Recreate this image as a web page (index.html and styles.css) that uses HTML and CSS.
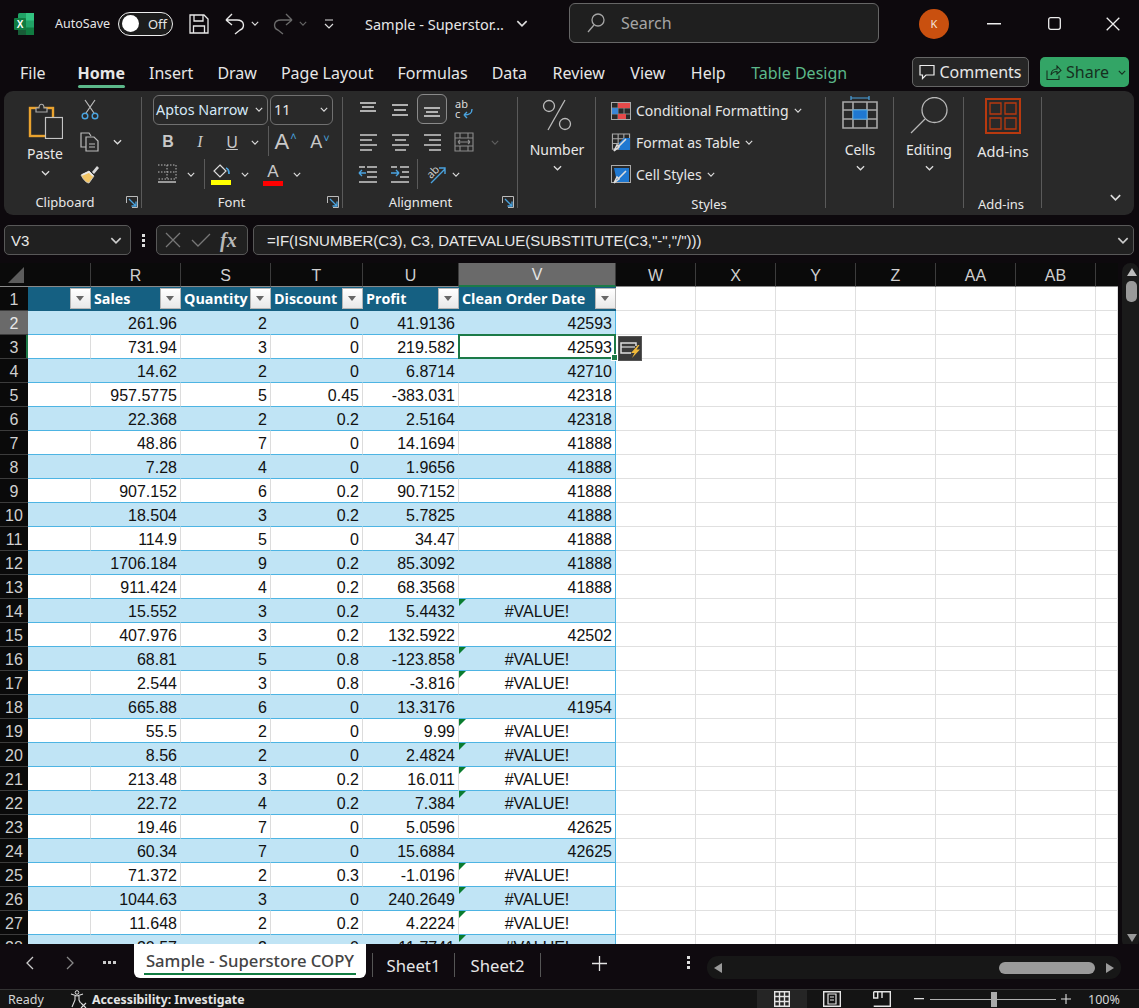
FILE: index.html
```html
<!DOCTYPE html>
<html lang="en">
<head>
<meta charset="utf-8">
<title>Sample - Superstore COPY - Excel</title>
<link rel="stylesheet" href="styles.css">
</head>
<body>
<svg class="defs" width="0" height="0" aria-hidden="true">
  <symbol id="chev" viewBox="0 0 10 6"><path d="M1 1l4 4 4-4" fill="none" stroke="currentColor" stroke-width="1.4"/></symbol>
  <symbol id="launch" viewBox="0 0 12 12"><path d="M.5 7V.5H11.5V11.5H6" fill="none" stroke="#bbb"/><path d="M3 3l7 7M10 5.5V10H5.5" fill="none" stroke="#4aa3df" stroke-width="1.3"/></symbol>
  <symbol id="lines-a" viewBox="0 0 20 18"><path d="M2 2h16M4 6h12M2 10h16" stroke="#ddd" stroke-width="1.3" fill="none"/></symbol>
  <symbol id="lines-m" viewBox="0 0 20 18"><path d="M2 4h16M4 9h12M2 14h16" stroke="#ddd" stroke-width="1.3" fill="none"/></symbol>
  <symbol id="lines-b" viewBox="0 0 20 18"><path d="M2 8h16M4 12h12M2 16h16" stroke="#ddd" stroke-width="1.3" fill="none"/></symbol>
  <symbol id="h-l" viewBox="0 0 20 20"><path d="M2 3h17M2 8h12M2 13h17M2 18h12" stroke="#ccc" stroke-width="1.3" fill="none"/></symbol>
  <symbol id="h-c" viewBox="0 0 20 20"><path d="M2 3h17M5 8h11M2 13h17M5 18h11" stroke="#ccc" stroke-width="1.3" fill="none"/></symbol>
  <symbol id="h-r" viewBox="0 0 20 20"><path d="M2 3h17M7 8h12M2 13h17M7 18h12" stroke="#ccc" stroke-width="1.3" fill="none"/></symbol>
  <symbol id="tbl" viewBox="0 0 20 20"><path d="M1 1h18v16H1zM1 6h18M1 11h18M7 1v16M13 1v16" fill="none" stroke="#aaa" stroke-width="1.2"/></symbol>
</svg>

<header class="titlebar">
  <svg class="xl" width="22" height="24" viewBox="0 0 22 24">
    <rect x="5" y="1" width="16" height="22" rx="1.5" fill="#21a366"/>
    <rect x="13" y="1" width="8" height="7.5" fill="#33c481"/>
    <rect x="5" y="15.5" width="8" height="7.5" fill="#185c37"/>
    <rect x="13" y="15.5" width="8" height="7.5" fill="#107c41"/>
    <rect x="1" y="6" width="12" height="12" rx="1" fill="#107c41"/>
    <text x="7" y="15.8" class="xl-x">X</text>
  </svg>
  <span class="autosave">AutoSave</span>
  <span class="toggle"><i class="knob"></i><span>Off</span></span>
  <svg class="q-save" width="20" height="20" viewBox="0 0 20 20"><path d="M1 1h14l4 4v14H1zM5 1v6h9V1M4.500 19v-7h11v7" fill="none" stroke="#e8e8e8" stroke-width="1.3"/></svg>
  <svg class="q-undo" width="20" height="22" viewBox="0 0 20 22"><path d="M1 7h11c8 0 8 8 3 10l-5 4M1 7l6-6M1 7l6 5" fill="none" stroke="#e8e8e8" stroke-width="1.4"/></svg>
  <svg class="q-chev" width="8" height="5"><use href="#chev"/></svg>
  <svg class="q-redo" width="20" height="22" viewBox="0 0 20 22"><path d="M19 7H8C0 7 0 15 5 17l5 4M19 7l-6-6M19 7l-6 5" fill="none" stroke="#6a6a6a" stroke-width="1.4"/></svg>
  <svg class="q-chev dim" width="8" height="5"><use href="#chev"/></svg>
  <svg class="q-more" width="10" height="10" viewBox="0 0 10 10"><path d="M1 1h8M1 5l4 4 4-4" fill="none" stroke="#ddd" stroke-width="1.2"/></svg>
  <span class="doc">Sample - Superstor...</span>
  <svg class="doc-chev" width="12" height="7"><use href="#chev"/></svg>
  <div class="search">
    <svg width="18" height="20" viewBox="0 0 18 20"><circle cx="11" cy="7" r="6" fill="none" stroke="#a5a5a5" stroke-width="1.3"/><path d="M7 12l-6 7" stroke="#a5a5a5" stroke-width="1.3"/></svg>
    <span>Search</span>
  </div>
  <span class="avatar">K</span>
  <svg class="win-min" width="14" height="2"><rect width="14" height="1.500" fill="#eee"/></svg>
  <svg class="win-max" width="13" height="13" viewBox="0 0 13 13"><rect x=".7" y=".7" width="11.600" height="11.600" rx="2" fill="none" stroke="#eee" stroke-width="1.300"/></svg>
  <svg class="win-close" width="14" height="14" viewBox="0 0 14 14"><path d="M.7.700l12.600 12.600M13.300.700L.7 13.300" stroke="#eee" stroke-width="1.300"/></svg>
</header>

<nav class="tabs">
  <span class="tab t-file">File</span>
  <span class="tab t-home">Home</span>
  <span class="tab">Insert</span>
  <span class="tab">Draw</span>
  <span class="tab">Page Layout</span>
  <span class="tab">Formulas</span>
  <span class="tab">Data</span>
  <span class="tab">Review</span>
  <span class="tab">View</span>
  <span class="tab">Help</span>
  <span class="tab t-design">Table Design</span>
  <span class="btn-comments">
    <svg width="16" height="16" viewBox="0 0 16 16"><path d="M1 1.500h14v9.500H7l-3.500 3.500V11H1z" fill="none" stroke="#eee" stroke-width="1.200"/></svg>
    Comments
  </span>
  <span class="btn-share">
    <svg width="16" height="15" viewBox="0 0 16 15"><path d="M1 5.500v9h12v-4M5 10c0-4 3-6 6-6V1l4 4.500L11 9V6.500C8 6.500 6 8 5 10z" fill="none" stroke="#16301f" stroke-width="1.100"/></svg>
    Share
    <svg class="share-chev" width="8" height="5"><use href="#chev"/></svg>
  </span>
</nav>

<section class="ribbon">
  <div class="group g-clip">
    <div class="body">
      <div class="paste">
        <svg width="36" height="38" viewBox="0 0 36 38"><rect x="3" y="7" width="23" height="28" fill="none" stroke="#eaa32f" stroke-width="2.400"/><path d="M9 7h3c0-5 5-5 5 0h3v4H9z" fill="#292929" stroke="#aaa" stroke-width="1.200"/><rect x="18.500" y="16.500" width="17" height="21" fill="#292929" stroke="#c4c4c4" stroke-width="1.200"/></svg>
        <span class="big-label">Paste</span>
        <svg class="chev" width="9" height="6"><use href="#chev"/></svg>
      </div>
      <div class="clip-tools">
        <div class="irow"><svg width="20" height="22" viewBox="0 0 20 22"><path d="M5 1l9 13M15 1L6 14" stroke="#bbb" stroke-width="1.200" fill="none"/><circle cx="5" cy="17" r="2.800" fill="none" stroke="#4aa3df" stroke-width="1.400"/><circle cx="15" cy="17" r="2.800" fill="none" stroke="#4aa3df" stroke-width="1.400"/></svg></div>
        <div class="irow"><svg width="20" height="20" viewBox="0 0 20 20"><path d="M8 15H1V1h8l2 3" fill="none" stroke="#bbb" stroke-width="1.200"/><path d="M6 5h8l4 4v10H6zM9 12h6M9 15h6" fill="#292929" stroke="#bbb" stroke-width="1.200"/></svg><svg class="chev c-copy" width="9" height="6"><use href="#chev"/></svg></div>
        <div class="irow"><svg width="20" height="20" viewBox="0 0 20 20"><path d="M12 8l5-6 2 2-5 6" fill="#d8d8d8"/><path d="M1 11l8-4 5 5-5 7c-3 0-6-4-8-8z" fill="#f2c565" stroke="#d8d8d8" stroke-width=".8"/><path d="M2 11l7-3 4 4" fill="none" stroke="#e8e8e8" stroke-width="1.500"/></svg></div>
      </div>
    </div>
    <div class="glabel"><span>Clipboard</span><svg class="launcher" width="12" height="12"><use href="#launch"/></svg></div>
  </div>

  <div class="group g-font">
    <div class="body col">
      <div class="frow r1">
        <span class="combo c-name">Aptos Narrow<svg width="8" height="5"><use href="#chev"/></svg></span>
        <span class="combo c-size">11<svg width="8" height="5"><use href="#chev"/></svg></span>
      </div>
      <div class="frow">
        <span class="fi b">B</span><span class="fi i">I</span><span class="fi u">U</span>
        <svg class="fchev" width="8" height="5"><use href="#chev"/></svg>
        <i class="vsep vs-a"></i>
        <span class="fi grow">A<small>&#708;</small></span><span class="fi shrink">A<small>&#709;</small></span>
      </div>
      <div class="frow r3">
        <span class="fi f-border"><svg width="20" height="20" viewBox="0 0 20 20"><path d="M1 1h18v14H1M1 8h18M10 1v14" fill="none" stroke="#bbb" stroke-dasharray="1.500 1.500"/><path d="M1 18h18" stroke="#ccc" stroke-width="1.400"/></svg></span>
        <svg class="fchev" width="8" height="5"><use href="#chev"/></svg>
        <i class="vsep vs-b"></i>
        <span class="fi f-fill"><svg width="20" height="22" viewBox="0 0 20 22"><path d="M9 2l6 6-6 6-6-6z" fill="none" stroke="#ddd" stroke-width="1.200"/><path d="M15 5c3 1 3 4 3 6" stroke="#4aa3df" stroke-width="1.800" fill="none"/><rect y="17" width="20" height="5" fill="#ffff00"/></svg></span>
        <svg class="fchev" width="8" height="5"><use href="#chev"/></svg>
        <span class="fi f-color"><span class="fc-a">A</span></span>
        <svg class="fchev" width="8" height="5"><use href="#chev"/></svg>
      </div>
    </div>
    <div class="glabel"><span>Font</span><svg class="launcher" width="12" height="12"><use href="#launch"/></svg></div>
  </div>

  <div class="group g-align">
    <div class="body">
      <div class="agrid">
        <span class="ai"><svg width="20" height="18"><use href="#lines-a"/></svg></span>
        <span class="ai"><svg width="20" height="18"><use href="#lines-m"/></svg></span>
        <span class="ai on"><svg width="20" height="18"><use href="#lines-b"/></svg></span>
        <span class="ai"><svg width="20" height="24" viewBox="0 0 20 24"><text x="1" y="10" class="wrap-t">ab</text><text x="1" y="20" class="wrap-t">c</text><path d="M18 11c0 5-3 6-8 6M10 17l3-3M10 17l3 3" fill="none" stroke="#4aa3df" stroke-width="1.400"/></svg></span>
        <span class="ai gap"></span>
        <span class="ai"><svg width="20" height="20"><use href="#h-l"/></svg></span>
        <span class="ai"><svg width="20" height="20"><use href="#h-c"/></svg></span>
        <span class="ai"><svg width="20" height="20"><use href="#h-r"/></svg></span>
        <span class="ai"><svg width="20" height="20" viewBox="0 0 20 20"><path d="M1 1h18v18H1zM1 6h18M1 14h18M6 1v5M14 1v5M6 14v5M14 14v5M4 10h12M4 10l2-2M4 10l2 2M16 10l-2-2M16 10l-2 2" fill="none" stroke="#8c8c8c" stroke-width="1.100"/></svg></span>
        <span class="ai"><svg class="dimchev" width="8" height="5"><use href="#chev"/></svg></span>
        <span class="ai"><svg width="20" height="20" viewBox="0 0 20 20"><path d="M9 3h10M9 8h10M9 13h10M1 18h18M1 3h6" stroke="#ccc" stroke-width="1.300" fill="none"/><path d="M1 9h7M1 9l3-3M1 9l3 3" stroke="#4aa3df" stroke-width="1.400" fill="none"/></svg></span>
        <span class="ai"><svg width="20" height="20" viewBox="0 0 20 20"><path d="M10 3h9M10 13h9M1 18h18M1 3h6M12 8h7" stroke="#ccc" stroke-width="1.300" fill="none"/><path d="M1 9h8M9 9L6 6M9 9l-3 3" stroke="#4aa3df" stroke-width="1.400" fill="none"/></svg></span>
        <span class="ai orient"><i class="vsep vs-c"></i><svg class="ic-orient" width="22" height="22" viewBox="0 0 22 22"><text x="2" y="13" class="orient-t" transform="rotate(-45 8 10)">ab</text><path d="M6 20L20 6M14 5h6v6" fill="none" stroke="#4aa3df" stroke-width="1.400"/></svg><svg class="ochev" width="8" height="5"><use href="#chev"/></svg></span>
      </div>
    </div>
    <div class="glabel"><span>Alignment</span><svg class="launcher" width="12" height="12"><use href="#launch"/></svg></div>
  </div>

  <div class="group g-number">
    <div class="bigbtn">
      <svg class="pct" width="32" height="32" viewBox="0 0 32 32"><circle cx="8" cy="7" r="5.500" fill="none" stroke="#bbb" stroke-width="1.300"/><circle cx="24" cy="25" r="5.500" fill="none" stroke="#bbb" stroke-width="1.300"/><path d="M24 1L7 31" stroke="#bbb" stroke-width="1.300"/></svg>
      <span class="big-label">Number</span>
      <svg class="chev" width="9" height="6"><use href="#chev"/></svg>
    </div>
  </div>

  <div class="group g-styles">
    <div class="body col sty">
      <div class="srow"><svg width="20" height="18" viewBox="0 0 20 18"><rect x=".5" y=".5" width="19" height="17" fill="none" stroke="#aaa"/><path d="M1 6h18M1 12h18M7 1v16M13 1v16" stroke="#888" fill="none"/><rect x="7" y="1" width="12" height="5" fill="#e64a4a"/><rect x="7" y="12" width="8" height="5" fill="#e64a4a"/><rect x="1" y="6" width="6" height="6" fill="#3b86d6"/></svg><span>Conditional Formatting</span><svg width="8" height="5"><use href="#chev"/></svg></div>
      <div class="srow"><svg width="20" height="19" viewBox="0 0 20 19"><use href="#tbl"/><path d="M8 10l5-5h6v12H8z" fill="#1f78d1"/><path d="M3 18l3-6 2 2zM8 13l7-7" stroke="#ddd" stroke-width="1.600" fill="none"/></svg><span>Format as Table</span><svg width="8" height="5"><use href="#chev"/></svg></div>
      <div class="srow"><svg width="20" height="19" viewBox="0 0 20 19"><rect x=".5" y=".5" width="19" height="17" fill="none" stroke="#aaa"/><path d="M3 3h15v14H6z" fill="#1f78d1"/><path d="M3 18l3-6 2 2zM8 13l7-7" stroke="#ddd" stroke-width="1.600" fill="none"/></svg><span>Cell Styles</span><svg width="8" height="5"><use href="#chev"/></svg></div>
    </div>
    <div class="glabel lo"><span>Styles</span></div>
  </div>

  <div class="group g-cells">
    <div class="bigbtn">
      <svg class="ic-cells" width="36" height="34" viewBox="0 0 36 34"><path d="M9 2h18M9 0v4M27 0v4" stroke="#4aa3df" stroke-width="1.200" fill="none"/><path d="M1 6h34v26H1zM1 14h34M1 23h34M11 6v26M25 6v26" fill="none" stroke="#a8a8a8" stroke-width="1.600"/><rect x="11" y="14" width="14" height="9" fill="#1f78d1" stroke="#4aa3df"/></svg>
      <span class="big-label">Cells</span>
      <svg class="chev" width="9" height="6"><use href="#chev"/></svg>
    </div>
  </div>

  <div class="group g-edit">
    <div class="bigbtn">
      <svg class="ic-edit" width="38" height="37" viewBox="0 0 38 37"><circle cx="24.500" cy="13" r="12.500" fill="none" stroke="#b8b8b8" stroke-width="1.300"/><path d="M15 22L1 36" stroke="#b8b8b8" stroke-width="1.300"/></svg>
      <span class="big-label">Editing</span>
      <svg class="chev" width="9" height="6"><use href="#chev"/></svg>
    </div>
  </div>

  <div class="group g-addins">
    <div class="bigbtn add">
      <svg class="ic-add" width="36" height="36" viewBox="0 0 36 36"><rect x="1" y="1" width="34" height="34" fill="none" stroke="#b8390f" stroke-width="2"/><path d="M5 5h11v11H5zM20 5h11v11H20zM5 20h11v11H5zM20 20h11v11H20z" fill="none" stroke="#b8390f" stroke-width="1.300"/></svg>
      <span class="big-label">Add-ins</span>
    </div>
    <div class="glabel lo"><span>Add-ins</span></div>
  </div>

  <svg class="collapse" width="13" height="7"><use href="#chev"/></svg>
</section>

<section class="formula">
  <div class="namebox"><span>V3</span><svg width="12" height="7"><use href="#chev"/></svg></div>
  <span class="dots"><i></i><i></i><i></i></span>
  <div class="fxbox">
    <svg width="16" height="16" viewBox="0 0 16 16"><path d="M1 1l14 14M15 1L1 15" stroke="#777" stroke-width="1.300"/></svg>
    <svg width="20" height="14" viewBox="0 0 20 14"><path d="M1 7l6 6L19 1" fill="none" stroke="#777" stroke-width="1.300"/></svg>
    <span class="fx">fx</span>
  </div>
  <div class="fbox"><span>=IF(ISNUMBER(C3), C3, DATEVALUE(SUBSTITUTE(C3,"-","/")))</span><svg width="12" height="7"><use href="#chev"/></svg></div>
</section>

<main class="sheet">
  <div class="gridwrap">
    <table class="grid">
      <colgroup><col class="w28"><col class="w63"><col class="w90"><col class="w90"><col class="w92"><col class="w96"><col class="w157"><col class="w80"><col class="w80"><col class="w80"><col class="w80"><col class="w80"><col class="w80"><col class="w22"></colgroup>
      <thead>
        <tr class="cols"><th class="corner"><i></i></th><th></th><th>R</th><th>S</th><th>T</th><th>U</th><th class="cur">V</th><th>W</th><th>X</th><th>Y</th><th>Z</th><th>AA</th><th>AB</th><th></th></tr>
      </thead>
      <tbody>
        <tr class="hdr"><th>1</th><td><div class="hc"><span></span><i class="fb"></i></div></td><td><div class="hc"><span>Sales</span><i class="fb"></i></div></td><td><div class="hc"><span>Quantity</span><i class="fb"></i></div></td><td><div class="hc"><span>Discount</span><i class="fb"></i></div></td><td><div class="hc"><span>Profit</span><i class="fb"></i></div></td><td><div class="hc"><span>Clean Order Date</span><i class="fb"></i></div></td><td class="e"></td><td class="e"></td><td class="e"></td><td class="e"></td><td class="e"></td><td class="e"></td><td class="e"></td></tr>
        <tr class="alt"><th class="rowon">2</th><td></td><td>261.96</td><td>2</td><td>0</td><td>41.9136</td><td>42593</td><td class="e"></td><td class="e"></td><td class="e"></td><td class="e"></td><td class="e"></td><td class="e"></td><td class="e"></td></tr>
        <tr><th class="rowcur">3</th><td></td><td>731.94</td><td>3</td><td>0</td><td>219.582</td><td class="sel">42593<i class="handle"></i><span class="flash"><svg width="22" height="20" viewBox="0 0 22 20"><path d="M12 14H2V4h15v3" fill="none" stroke="#ddd" stroke-width="1.500"/><path d="M2 8h14" stroke="#ddd" stroke-width="1.200"/><path d="M19 6l-7 8h3.500l-2.500 5 8-8.500h-3.500l3-4.500z" fill="#f0b93a"/></svg></span></td><td class="e"></td><td class="e"></td><td class="e"></td><td class="e"></td><td class="e"></td><td class="e"></td><td class="e"></td></tr>
        <tr class="alt"><th>4</th><td></td><td>14.62</td><td>2</td><td>0</td><td>6.8714</td><td>42710</td><td class="e"></td><td class="e"></td><td class="e"></td><td class="e"></td><td class="e"></td><td class="e"></td><td class="e"></td></tr>
        <tr><th>5</th><td></td><td>957.5775</td><td>5</td><td>0.45</td><td>-383.031</td><td>42318</td><td class="e"></td><td class="e"></td><td class="e"></td><td class="e"></td><td class="e"></td><td class="e"></td><td class="e"></td></tr>
        <tr class="alt"><th>6</th><td></td><td>22.368</td><td>2</td><td>0.2</td><td>2.5164</td><td>42318</td><td class="e"></td><td class="e"></td><td class="e"></td><td class="e"></td><td class="e"></td><td class="e"></td><td class="e"></td></tr>
        <tr><th>7</th><td></td><td>48.86</td><td>7</td><td>0</td><td>14.1694</td><td>41888</td><td class="e"></td><td class="e"></td><td class="e"></td><td class="e"></td><td class="e"></td><td class="e"></td><td class="e"></td></tr>
        <tr class="alt"><th>8</th><td></td><td>7.28</td><td>4</td><td>0</td><td>1.9656</td><td>41888</td><td class="e"></td><td class="e"></td><td class="e"></td><td class="e"></td><td class="e"></td><td class="e"></td><td class="e"></td></tr>
        <tr><th>9</th><td></td><td>907.152</td><td>6</td><td>0.2</td><td>90.7152</td><td>41888</td><td class="e"></td><td class="e"></td><td class="e"></td><td class="e"></td><td class="e"></td><td class="e"></td><td class="e"></td></tr>
        <tr class="alt"><th>10</th><td></td><td>18.504</td><td>3</td><td>0.2</td><td>5.7825</td><td>41888</td><td class="e"></td><td class="e"></td><td class="e"></td><td class="e"></td><td class="e"></td><td class="e"></td><td class="e"></td></tr>
        <tr><th>11</th><td></td><td>114.9</td><td>5</td><td>0</td><td>34.47</td><td>41888</td><td class="e"></td><td class="e"></td><td class="e"></td><td class="e"></td><td class="e"></td><td class="e"></td><td class="e"></td></tr>
        <tr class="alt"><th>12</th><td></td><td>1706.184</td><td>9</td><td>0.2</td><td>85.3092</td><td>41888</td><td class="e"></td><td class="e"></td><td class="e"></td><td class="e"></td><td class="e"></td><td class="e"></td><td class="e"></td></tr>
        <tr><th>13</th><td></td><td>911.424</td><td>4</td><td>0.2</td><td>68.3568</td><td>41888</td><td class="e"></td><td class="e"></td><td class="e"></td><td class="e"></td><td class="e"></td><td class="e"></td><td class="e"></td></tr>
        <tr class="alt"><th>14</th><td></td><td>15.552</td><td>3</td><td>0.2</td><td>5.4432</td><td class="err">#VALUE!</td><td class="e"></td><td class="e"></td><td class="e"></td><td class="e"></td><td class="e"></td><td class="e"></td><td class="e"></td></tr>
        <tr><th>15</th><td></td><td>407.976</td><td>3</td><td>0.2</td><td>132.5922</td><td>42502</td><td class="e"></td><td class="e"></td><td class="e"></td><td class="e"></td><td class="e"></td><td class="e"></td><td class="e"></td></tr>
        <tr class="alt"><th>16</th><td></td><td>68.81</td><td>5</td><td>0.8</td><td>-123.858</td><td class="err">#VALUE!</td><td class="e"></td><td class="e"></td><td class="e"></td><td class="e"></td><td class="e"></td><td class="e"></td><td class="e"></td></tr>
        <tr><th>17</th><td></td><td>2.544</td><td>3</td><td>0.8</td><td>-3.816</td><td class="err">#VALUE!</td><td class="e"></td><td class="e"></td><td class="e"></td><td class="e"></td><td class="e"></td><td class="e"></td><td class="e"></td></tr>
        <tr class="alt"><th>18</th><td></td><td>665.88</td><td>6</td><td>0</td><td>13.3176</td><td>41954</td><td class="e"></td><td class="e"></td><td class="e"></td><td class="e"></td><td class="e"></td><td class="e"></td><td class="e"></td></tr>
        <tr><th>19</th><td></td><td>55.5</td><td>2</td><td>0</td><td>9.99</td><td class="err">#VALUE!</td><td class="e"></td><td class="e"></td><td class="e"></td><td class="e"></td><td class="e"></td><td class="e"></td><td class="e"></td></tr>
        <tr class="alt"><th>20</th><td></td><td>8.56</td><td>2</td><td>0</td><td>2.4824</td><td class="err">#VALUE!</td><td class="e"></td><td class="e"></td><td class="e"></td><td class="e"></td><td class="e"></td><td class="e"></td><td class="e"></td></tr>
        <tr><th>21</th><td></td><td>213.48</td><td>3</td><td>0.2</td><td>16.011</td><td class="err">#VALUE!</td><td class="e"></td><td class="e"></td><td class="e"></td><td class="e"></td><td class="e"></td><td class="e"></td><td class="e"></td></tr>
        <tr class="alt"><th>22</th><td></td><td>22.72</td><td>4</td><td>0.2</td><td>7.384</td><td class="err">#VALUE!</td><td class="e"></td><td class="e"></td><td class="e"></td><td class="e"></td><td class="e"></td><td class="e"></td><td class="e"></td></tr>
        <tr><th>23</th><td></td><td>19.46</td><td>7</td><td>0</td><td>5.0596</td><td>42625</td><td class="e"></td><td class="e"></td><td class="e"></td><td class="e"></td><td class="e"></td><td class="e"></td><td class="e"></td></tr>
        <tr class="alt"><th>24</th><td></td><td>60.34</td><td>7</td><td>0</td><td>15.6884</td><td>42625</td><td class="e"></td><td class="e"></td><td class="e"></td><td class="e"></td><td class="e"></td><td class="e"></td><td class="e"></td></tr>
        <tr><th>25</th><td></td><td>71.372</td><td>2</td><td>0.3</td><td>-1.0196</td><td class="err">#VALUE!</td><td class="e"></td><td class="e"></td><td class="e"></td><td class="e"></td><td class="e"></td><td class="e"></td><td class="e"></td></tr>
        <tr class="alt"><th>26</th><td></td><td>1044.63</td><td>3</td><td>0</td><td>240.2649</td><td class="err">#VALUE!</td><td class="e"></td><td class="e"></td><td class="e"></td><td class="e"></td><td class="e"></td><td class="e"></td><td class="e"></td></tr>
        <tr><th>27</th><td></td><td>11.648</td><td>2</td><td>0.2</td><td>4.2224</td><td class="err">#VALUE!</td><td class="e"></td><td class="e"></td><td class="e"></td><td class="e"></td><td class="e"></td><td class="e"></td><td class="e"></td></tr>
        <tr class="alt"><th>28</th><td></td><td>20.57</td><td>2</td><td>0</td><td>11.7741</td><td class="err">#VALUE!</td><td class="e"></td><td class="e"></td><td class="e"></td><td class="e"></td><td class="e"></td><td class="e"></td><td class="e"></td></tr>
      </tbody>
    </table>
  </div>
  <div class="vscroll">
    <i class="tri-up"></i>
    <i class="vthumb"></i>
    <i class="spacer"></i>
    <i class="tri-down"></i>
  </div>
</main>

<section class="sheettabs">
  <svg class="nav-l" width="9" height="14" viewBox="0 0 9 14"><path d="M8 1L2 7l6 6" fill="none" stroke="#ccc" stroke-width="1.300"/></svg>
  <svg class="nav-r" width="9" height="14" viewBox="0 0 9 14"><path d="M1 1l6 6-6 6" fill="none" stroke="#888" stroke-width="1.300"/></svg>
  <span class="nav-more"><i></i><i></i><i></i></span>
  <span class="stab active"><span>Sample - Superstore COPY</span></span>
  <span class="stab plain">Sheet1</span>
  <span class="stab plain">Sheet2</span>
  <svg class="add-sheet" width="15" height="15" viewBox="0 0 15 15"><path d="M7.500 0v15M0 7.500h15" stroke="#e4e4e4" stroke-width="1.300"/></svg>
  <span class="kebab"><i></i><i></i><i></i></span>
  <div class="hscroll">
    <i class="tri-left"></i>
    <i class="hthumb"></i>
    <i class="tri-right"></i>
  </div>
</section>

<footer class="status">
  <span class="ready">Ready</span>
  <svg class="acc" width="18" height="18" viewBox="0 0 18 18"><circle cx="7" cy="2.500" r="1.800" fill="none" stroke="#ddd"/><path d="M1 4l6 2 6-2M5 6v4l-3 7M9 6v4l1.500 3" fill="none" stroke="#ddd" stroke-width="1.100"/><path d="M11 13l5 5M16 13l-5 5" stroke="#ddd" stroke-width="1.100"/></svg>
  <span class="acc-t">Accessibility: Investigate</span>
  <span class="viewbtn on"><svg width="16" height="16" viewBox="0 0 16 16"><path d="M.7.700h14.600v14.600H.7zM.7 5.500h14.600M.7 10.500h14.600M5.500.700v14.600M10.500.700v14.600" fill="none" stroke="#e4e4e4" stroke-width="1.400"/></svg></span>
  <span class="viewbtn"><svg width="18" height="16" viewBox="0 0 18 16"><path d="M.7.700h16.600v14.600H.7z" fill="none" stroke="#e4e4e4" stroke-width="1.400"/><path d="M5 3h8v10H5zM7 6h4M7 9h4" fill="none" stroke="#e4e4e4" stroke-width="1.200"/></svg></span>
  <span class="viewbtn"><svg width="18" height="16" viewBox="0 0 18 16"><path d="M.7.700h16.600v14.600H.7M17.300 15.300V.7M.7.700v6.300h4V.7M9 .700v6.300" fill="none" stroke="#e4e4e4" stroke-width="1.400"/></svg></span>
  <svg class="z-minus" width="10" height="2"><rect width="10" height="1.300" fill="#ddd"/></svg>
  <span class="slider"><i></i></span>
  <svg class="z-plus" width="10" height="10" viewBox="0 0 10 10"><path d="M5 0v10M0 5h10" stroke="#ddd" stroke-width="1.100"/></svg>
  <span class="zoom">100%</span>
</footer>
</body>
</html>
```
FILE: styles.css
```css
* { box-sizing: border-box; }
html, body { margin: 0; padding: 0; }
body {
  width: 1139px; height: 1008px; overflow: hidden;
  display: flex; flex-direction: column;
  background: #0d090d; color: #e6e6e6;
  font-family: "Noto Sans", "Open Sans", sans-serif;
  font-size: 14px;
}
i { display: block; font-style: normal; }
svg { display: block; flex: none; }
.defs { position: absolute; }

/* title bar */
.titlebar { height: 47px; display: flex; align-items: center; padding-left: 13px; flex: none; }
.xl-x { font: 700 10px "Liberation Sans", sans-serif; fill: #fff; text-anchor: middle; }
.autosave { margin-left: 20px; font-size: 12.500px; width: 54px; white-space: nowrap; }
.toggle { margin-left: 9px; width: 55px; height: 24px; border: 1.500px solid #eee; border-radius: 12px; display: flex; align-items: center; padding: 0 5px 0 3px; justify-content: space-between; font-size: 13px; background: #1c1c1c; }
.knob { width: 17px; height: 17px; border-radius: 50%; background: #fff; }
.q-save { margin-left: 16px; }
.q-undo { margin-left: 16px; }
.q-chev { margin-left: 6px; color: #ddd; }
.q-chev.dim { color: #666; }
.q-redo { margin-left: 14px; }
.q-more { margin-left: 17px; }
.doc { margin-left: 31px; font-size: 14.500px; width: 143px; white-space: nowrap; }
.doc-chev { margin-left: 8px; color: #ddd; }
.search { margin-left: 41px; width: 310px; height: 40px; margin-top: -1px; border: 1px solid #666; border-radius: 6px; background: #1f1f1f; display: flex; align-items: center; padding-left: 17px; gap: 16px; color: #a5a5a5; font-size: 16px; }
.avatar { margin-left: 40px; width: 30px; height: 30px; border-radius: 50%; background: #c9500f; color: #f5e6dc; font-size: 11px; display: flex; align-items: center; justify-content: center; }
.win-min { margin-left: 38px; }
.win-max { margin-left: 47px; }
.win-close { margin-left: 45px; }

/* ribbon tabs */
.tabs { height: 44px; display: flex; align-items: center; flex: none; padding: 7px 0 0 20px; font-size: 16px; }
.tab { white-space: nowrap; margin-right: 24px; position: relative; }
.tab:nth-child(n+7) { margin-right: 25.500px; }
.t-file { margin-right: 32px; }
.t-home { font-weight: 700; }
.t-home::after { content: ""; position: absolute; left: 0; right: 0; bottom: -4px; height: 3px; border-radius: 2px; background: #5cb88a; }
.tab.t-design { color: #5cb88a; margin-right: 0; }
.btn-comments { margin-left: auto; width: 117px; height: 30px; margin-top: -1px; border: 1px solid #666; border-radius: 5px; background: #262626; display: flex; align-items: center; justify-content: center; gap: 4px; font-size: 16px; }
.btn-share { margin: -1px 10px 0 11px; width: 89px; height: 30px; border-radius: 5px; background: #33a566; color: #16301f; display: flex; align-items: center; padding-left: 6px; gap: 4px; font-size: 16px; }
.share-chev { margin-left: 5px; }

/* ribbon */
.ribbon { margin: 0 5px 0 4px; height: 124px; flex: none; background: #292929; border-radius: 9px; padding-top: 3px; display: flex; color: #e8e8e8; position: relative; }
.group { height: 121px; display: flex; flex-direction: column; background: linear-gradient(#5a5a5a, #5a5a5a) right 0 top 3px / 1px 111px no-repeat; }
.body { height: 96px; display: flex; flex: none; }
.col { flex-direction: column; }
.glabel { flex: 1; display: flex; align-items: center; font-size: 13px; padding-right: 4px; margin-top: -1px; }
.glabel span { flex: 1; text-align: center; }
.glabel.lo { padding-top: 4px; }
.g-font .glabel span { margin-right: 6px; }
.g-align .glabel span { margin-right: 4px; }
.big-label { font-size: 14px; display: block; text-align: center; white-space: nowrap; }
.chev { color: #ddd; }

.g-clip { width: 138px; }
.paste { width: 42px; margin-left: 20px; display: flex; flex-direction: column; align-items: center; padding-top: 7px; }
.paste .big-label { margin-top: 5px; }
.paste .chev { margin-top: 7px; }
.clip-tools { margin-left: 12px; display: flex; flex-direction: column; }
.irow { height: 32px; display: flex; align-items: center; width: 50px; padding-left: 2px; color: #ddd; }
.c-copy { margin-left: 13px; }

.g-font { width: 201px; }
.frow { height: 32px; display: flex; align-items: center; padding-left: 10px; color: #ddd; }
.r1 { padding-left: 11px; height: 31px; margin-bottom: 1px; gap: 2px; }
.combo { height: 30px; border: 1px solid #707070; border-radius: 6px; display: flex; align-items: center; justify-content: space-between; padding: 0 4px 0 2px; font-size: 14.300px; white-space: nowrap; color: #d4e8f7; }
.c-name { width: 115px; }
.c-size { width: 63px; padding-left: 3px; color: #e8e8e8; }
.combo svg { color: #ddd; }
.fi { width: 32px; text-align: center; font-size: 16px; display: flex; align-items: center; justify-content: center; color: #c8c8c8; }
.b { font-weight: 700; font-family: "Liberation Sans", sans-serif; }
.i { font-style: italic; font-family: "Liberation Serif", serif; }
.u { text-decoration: underline; }
.fchev { color: #ddd; margin: 0 3px; }
.r3 .fchev { margin: 0 3px 0 5px; }
.vsep { width: 1px; height: 30px; background: #5a5a5a; }
.vs-a { margin: -2px 0 0 6px; }
.vs-b { margin: 0 1px 0 6px; }
.grow, .shrink { font-size: 22px; font-weight: 300; line-height: 1; width: 33px; font-family: "Liberation Sans", sans-serif; }
.shrink { font-size: 18px; width: 36px; }
.fi small { font-size: 11px; color: #4aa3df; align-self: flex-start; margin-left: 1px; }
.f-border { width: 30px; }
.f-fill { width: 30px; }
.f-color { width: 30px; margin-left: 6px; }
.fc-a { display: block; font: 400 17px/17px "Liberation Sans", sans-serif; border-bottom: 5px solid #f00; width: 20px; text-align: center; height: 23px; }

.g-align { width: 175px; }
.agrid { margin-left: 9px; display: grid; grid-template-columns: repeat(4, 32px) 30px; grid-auto-rows: 32px; }
.ai { display: flex; align-items: center; justify-content: center; }
.ai.on { border: 1px solid #8a8a8a; border-radius: 6px; width: 30px; height: 30px; margin: 0 0 0 1px; background: #333; }
.dimchev { color: #5f5f5f; }
.wrap-t { font: 400 11px "Noto Sans", sans-serif; fill: #ddd; }
.orient { grid-column: span 3; justify-content: flex-start; }
.vs-c { margin-left: 1px; }
.ic-orient { margin-left: 7px; overflow: visible; }
.orient-t { font: 400 11px "Noto Sans", sans-serif; fill: #ccc; }
.ochev { color: #ddd; margin-left: 5px; }

.g-number { width: 78px; }
.bigbtn { display: flex; flex-direction: column; align-items: center; }
.pct { margin-top: 5px; }
.bigbtn .big-label { margin-top: 9px; }
.bigbtn .chev { margin-top: 6px; }

.g-styles { width: 230px; }
.sty { padding: 1px 0 0 15px; }
.srow { height: 32px; display: flex; align-items: center; gap: 5px; font-size: 14px; white-space: nowrap; color: #e6e6e6; }
.srow svg:last-child { color: #ddd; }

.g-cells { width: 68px; }
.ic-cells { margin-top: 2px; }
.g-cells .big-label { margin-top: 10px; }
.g-edit { width: 70px; }
.ic-edit { margin-top: 3px; }
.g-edit .big-label { margin-top: 6px; }
.g-addins { width: 78px; }
.add { height: 96px; flex: none; }
.ic-add { margin-top: 4px; }
.add .big-label { margin-top: 7px; font-size: 14.500px; }
.collapse { color: #ddd; margin: 100px 0 0 67px; }

/* formula bar */
.formula { margin: 10px 5px 0 4px; height: 30px; display: flex; align-items: stretch; flex: none; }
.namebox, .fxbox, .fbox { border: 1px solid #585858; border-radius: 5px; background: #202020; display: flex; align-items: center; }
.namebox { width: 127px; justify-content: space-between; padding: 0 8px 0 6px; font: 15px "Liberation Sans", sans-serif; color: #e8e8e8; }
.dots { width: 25px; display: flex; flex-direction: column; align-items: center; justify-content: center; gap: 2px; }
.dots i, .nav-more i, .kebab i { width: 3px; height: 3px; background: #ddd; }
.fxbox { width: 92px; padding-left: 8px; gap: 10px; }
.fx { font: italic 700 20px "Liberation Serif", serif; color: #b8b8b8; margin-left: -1px; }
.fbox { margin-left: 5px; flex: 1; justify-content: space-between; padding: 0 4px 0 13px; font: 15px "Liberation Sans", sans-serif; color: #e8e8e8; }
.namebox svg, .fbox svg { color: #ccc; }

/* sheet */
.sheet { margin-top: 8px; height: 681px; flex: none; display: flex; position: relative; }
.gridwrap { width: 1118px; height: 681px; overflow: hidden; background: #fff; flex: none; }
.grid { table-layout: fixed; width: 1118px; border-collapse: separate; border-spacing: 0; font: 16px/1 "Liberation Sans", sans-serif; color: #111; }
.w28 { width: 28px; } .w63 { width: 63px; } .w90 { width: 90px; } .w92 { width: 92px; }
.w96 { width: 96px; } .w157 { width: 157px; } .w80 { width: 80px; } .w22 { width: 22px; }
.grid th { font-weight: 400; background: #0a0a0a; color: #d0d0d0; padding: 2px 0 0; text-align: center; }
.cols th { height: 24px; border-right: 1px solid #3c3c3c; border-bottom: 1px solid #8a8a8a; font-size: 16px; vertical-align: middle; }
.cols th:last-child { border-right: 0; }
.cols .corner { position: relative; border-right: 0; padding: 0; }
.corner i { width: 0; height: 0; border-style: solid; border-width: 0 0 16px 16px; border-color: transparent transparent #5c5c5c transparent; margin-left: 8px; }
.cols .cur { background: #6a6a6a; color: #e4e4e4; border-bottom: 2px solid #1c7a48; }
tbody th { height: 24px; border-bottom: 1px solid #3c3c3c; font-size: 16px; }
tbody .rowon { background: #6a6a6a; color: #e8e8e8; }
tbody .rowcur { box-shadow: inset -2px 0 0 #1c7a48; }
td { height: 24px; padding: 2px 3px 0 0; text-align: right; background: #fff; vertical-align: middle; border-bottom: 1px solid #4db4e3; border-right: 1px solid #dcdcdc; white-space: nowrap; overflow: hidden; }
tr.alt td { background: #c0e4f5; border-right-color: #c0e4f5; }
td:nth-child(7) { border-right-color: #4db4e3 !important; }
td.e, tr.alt td.e, tr.hdr td.e { background: #fff; border-bottom-color: #e0e0e0; border-right-color: #e0e0e0; }
.hdr td:not(.e) { background: #156082; border-right: 0; border-bottom: 1px solid #156082; padding: 0; }
.hc { display: flex; justify-content: space-between; align-items: center; padding-left: 3px; color: #fff; font: 700 14.300px "Open Sans", sans-serif; }
.fb { width: 21px; height: 21px; background: linear-gradient(#fff, #e8e8e8); border: 1px solid #b5b5b5; position: relative; flex: none; }
.fb::after { content: ""; position: absolute; left: 5px; top: 7px; border-style: solid; border-width: 5px 4.500px 0; border-color: #666 transparent transparent; }
td.err { text-align: center; position: relative; padding: 2px 0 0; }
td.err::before { content: ""; position: absolute; left: 0; top: 0; border-style: solid; border-width: 7px 7px 0 0; border-color: #0a7c2f transparent transparent; }
td.sel { position: relative; overflow: visible; }
td.sel::after { content: ""; position: absolute; left: -1px; top: -1px; right: -1px; bottom: -1px; border: 2px solid #1c7a48; }
.handle { position: absolute; right: -3px; bottom: -3px; width: 7px; height: 7px; background: #1c7a48; border: 1px solid #fff; z-index: 2; }
.flash { position: absolute; left: 159px; top: 1px; width: 24px; height: 25px; background: #3a3a3a; border: 1px solid #555; display: flex; align-items: center; justify-content: center; z-index: 3; }

.vscroll { display: flex; flex-direction: column; align-items: center; background: #1a1a1a; border-radius: 9px; margin-left: 4px; width: 17px; padding: 5px 0 1px 2px; height: 686px; }
.tri-up { border-style: solid; border-width: 0 5.500px 8px; border-color: transparent transparent #bdbdbd; }
.vthumb { width: 11px; height: 21px; border-radius: 5px; background: #9a9a9a; margin-top: 5px; }
.spacer { flex: 1; }
.tri-down { border-style: solid; border-width: 8px 5.500px 0; border-color: #9a9a9a transparent transparent; margin-bottom: 6px; }

/* sheet tabs */
.sheettabs { height: 46px; flex: none; display: flex; align-items: flex-start; border-bottom: 1px solid #333; position: relative; z-index: 1; background: #0f0a0f; }
.nav-l { margin: 12px 0 0 25px; }
.nav-r { margin: 12px 0 0 32px; }
.nav-more { margin: 17px 0 0 28px; display: flex; gap: 2px; }
.nav-more i { width: 3px; height: 3px; background: #ccc; }
.stab { font-size: 16.700px; white-space: nowrap; }
.active { margin-left: 18px; width: 232px; height: 34px; background: #fff; color: #444; border-radius: 0 0 6px 6px; padding: 4px 10px 0; font-weight: 500; }
.active span { display: block; border-bottom: 2px solid #107c41; height: 27px; text-align: center; white-space: nowrap; line-height: 26px; }
.plain { height: 24px; margin-top: 9px; display: flex; align-items: center; border-right: 1px solid #555; }
.active + .plain { margin-left: 6px; border-left: 1px solid #555; padding: 0 14px; width: 83px; justify-content: center; }
.plain + .plain { width: 86px; justify-content: center; }
.add-sheet { margin: 12px 0 0 51px; }
.kebab { margin: 12px 0 0 80px; display: flex; flex-direction: column; gap: 2px; }
.hscroll { margin: 12px 0 0 17px; width: 414px; height: 23px; background: #171717; border-radius: 11px; display: flex; align-items: center; padding: 0 7px; }
.tri-left { border-style: solid; border-width: 5.500px 8px 5.500px 0; border-color: transparent #9a9a9a transparent transparent; }
.hthumb { width: 96px; height: 12px; border-radius: 6px; background: #9a9a9a; margin-left: auto; margin-right: 11px; }
.tri-right { border-style: solid; border-width: 5.500px 0 5.500px 8px; border-color: transparent transparent transparent #9a9a9a; }

/* status bar */
.status { height: 18px; flex: none; background: #141414; display: flex; align-items: center; font-size: 12.500px; color: #d4d4d4; }
.ready { margin-left: 8px; width: 62px; }
.acc { margin-right: 4px; }
.acc-t { font-weight: 700; font-size: 12.300px; color: #e4e4e4; width: 152px; white-space: nowrap; }
.viewbtn { width: 50px; height: 18px; display: flex; align-items: center; justify-content: center; }
.viewbtn.on { margin-left: 513px; background: #252525; }
.z-minus { margin-left: 7px; }
.slider { margin-left: 6px; width: 126px; height: 1px; background: #b0b0b0; position: relative; }
.slider i { position: absolute; left: 61px; top: -7px; width: 6px; height: 15px; background: #aaa; }
.z-plus { margin-left: 5px; }
.zoom { margin-left: 17px; }
```
